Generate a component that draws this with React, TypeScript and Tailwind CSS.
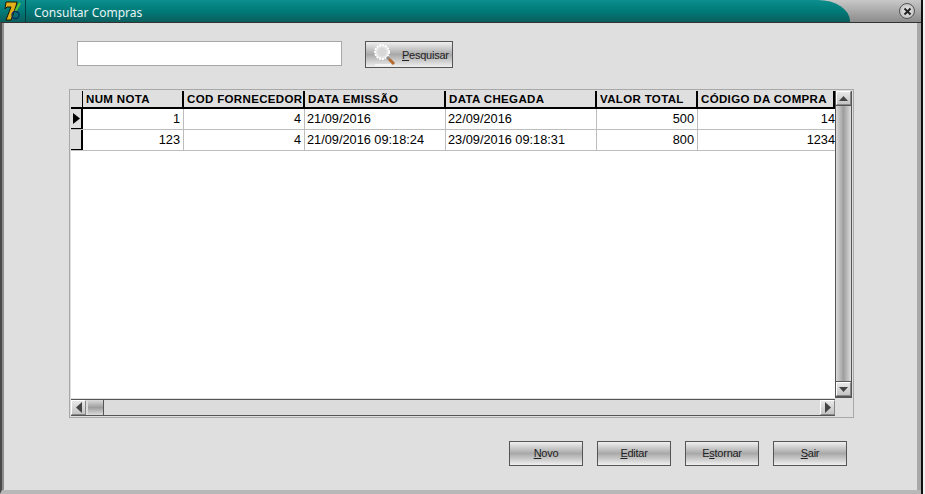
// Consultar Compras window
const columns = ['NUM NOTA', 'COD FORNECEDOR', 'DATA EMISSÃO', 'DATA CHEGADA', 'VALOR TOTAL', 'CÓDIGO DA COMPRA'];
const rows = [
  ['1', '4', '21/09/2016', '22/09/2016', '500', '14'],
  ['123', '4', '21/09/2016 09:18:24', '23/09/2016 09:18:31', '800', '1234'],
];
const rightAligned = [true, true, false, false, true, true];
const gridCols = 'grid grid-cols-[12px_101px_121px_141px_151px_101px_137px]';

function Logo() {
  return (
    <svg width="25" height="22" viewBox="0 0 25 22" className="shrink-0">
      <polygon points="6,2 17,2 16,6 11,20 6,20 11,7 7,7 5,9" fill="#e0b01a" stroke="#1c1600" strokeWidth="1" />
      <path d="M15 12 L20 3" stroke="#5ac42c" strokeWidth="2.2" />
      <circle cx="15.5" cy="15" r="3.5" fill="none" stroke="#0c2a66" strokeWidth="1.3" />
    </svg>
  );
}

function CloseButton() {
  return (
    <div className="flex h-[16px] w-[16px] items-center justify-center rounded-full border border-[#555] bg-[radial-gradient(circle,#f2f2f2,#b0b0b0)]">
      <svg width="9" height="9" viewBox="0 0 9 9">
        <path d="M1.5 1.5 L7.5 7.5 M7.5 1.5 L1.5 7.5" stroke="#222" strokeWidth="2" />
      </svg>
    </div>
  );
}

function Magnifier() {
  return (
    <svg width="26" height="24" viewBox="0 0 26 24" className="shrink-0">
      <rect x="4" y="21" width="16" height="2" fill="#f4f4f4" />
      <circle cx="11" cy="9" r="7" fill="#e6e6e6" stroke="#ffffff" strokeWidth="2" strokeDasharray="2 1" />
      <circle cx="11" cy="9" r="4.5" fill="#d8d8d8" />
      <path d="M16 14 L18 16" stroke="#8a8a8a" strokeWidth="3" />
      <path d="M18 16 L23 21" stroke="#b5692c" strokeWidth="3" />
    </svg>
  );
}

function ActionButton({ before = '', mark, after }: { before?: string; mark: string; after: string }) {
  return (
    <button className="h-[25px] w-[74px] border border-[#555] bg-gradient-to-b from-[#f0f0f0] via-[#a9a9a9] to-[#f0f0f0] text-[11px] leading-none tracking-[-0.25px] text-[#222]">
      {before}<u>{mark}</u>{after}
    </button>
  );
}

function ScrollArrow({ dir }: { dir: 'up' | 'down' | 'left' | 'right' }) {
  const points = { up: '1,6 10,6 5.5,1', down: '1,1 10,1 5.5,6', left: '7,0 7,11 1,5.5', right: '1,0 1,11 7,5.5' }[dir];
  const vertical = dir === 'up' || dir === 'down';
  return (
    <div className={`flex shrink-0 items-center justify-center border border-t-white border-l-white border-r-[#888] border-b-[#888] bg-gradient-to-b from-[#e8e8e8] to-[#c4c4c4] ${vertical ? 'h-[14px] w-[15px]' : 'h-[15px] w-[15px]'}`}>
      <svg width={vertical ? 11 : 8} height={vertical ? 7 : 11}>
        <polygon points={points} fill="#444" />
      </svg>
    </div>
  );
}

export default function App() {
  return (
    <div className="h-[494px] w-[925px] overflow-hidden bg-[#f2f2f2] font-['Liberation_Sans',sans-serif]">
      <div className="flex h-full w-[923px] flex-col border-r-2 border-[#111]">
        {/* title bar */}
        <div className="flex h-[22px] shrink-0 items-center bg-gradient-to-b from-[#c8c8c8] to-[#8c8c8c] pr-[6px]">
          <div className="flex h-full w-[850px] items-center rounded-tr-[32px_21px] bg-gradient-to-b from-[#0c8f8d] via-[#007a78] to-[#0a5f5e]">
            <Logo />
            <div className="h-full w-px bg-[#063f3f]" />
            <span className="ml-[8px] pt-[3px] font-['Noto_Sans',sans-serif] text-[12px] leading-none text-[#e8f4f4]">Consultar Compras</span>
          </div>
          <div className="ml-auto">
            <CloseButton />
          </div>
        </div>

        {/* window body */}
        <div className="flex min-h-0 flex-1 flex-col border-t border-b-[4px] border-l-2 border-t-[#333] border-b-[#b8b8b8] border-l-[#4a4a4a]">
          <div className="flex min-h-0 flex-1 flex-col border-r-[4px] border-l-2 border-r-[#a8a8a8] border-l-[#8c8c8c] bg-[#dfdfdf] pl-[73px]">
            {/* search */}
            <div className="mt-[18px] flex items-start">
              <input className="h-[25px] w-[265px] border border-[#a8a8a8] bg-white" />
              <button className="ml-[23px] flex h-[27px] w-[88px] items-center border border-[#555] bg-gradient-to-b from-[#f0f0f0] via-[#a9a9a9] to-[#f0f0f0] pl-[5px] text-[11px] leading-none tracking-[-0.25px] text-[#222]">
                <Magnifier />
                <span className="mt-[2px] ml-[5px]"><u>P</u>esquisar</span>
              </button>
            </div>

            {/* data grid */}
            <div className="mt-[21px] ml-[-8px] flex h-[329px] w-[785px] flex-col border border-[#a8a8a8] p-px">
              <div className="flex min-h-0 flex-1">
                <div className="w-[764px] shrink-0 overflow-hidden bg-white">
                  <div className={`${gridCols} h-[18px] w-[764px] border-b-2 border-black bg-[#dfdfdf]`}>
                    <div className="border-r border-black" />
                    {columns.map((c) => (
                      <div key={c} className="overflow-hidden border-r-2 border-black pl-[3px] text-[11.5px] leading-[17px] font-bold tracking-[0.35px] whitespace-nowrap text-black">
                        {c}
                      </div>
                    ))}
                  </div>
                  {rows.map((row, r) => (
                    <div key={r} className={`${gridCols} h-[21px] w-[764px] border-b border-[#bdbdbd]`}>
                      <div className="flex items-center border-r-2 border-b border-black bg-[#dfdfdf] pl-[2px]">
                        {r === 0 && (
                          <svg width="7" height="11"><polygon points="0,0 7,5.5 0,11" fill="#000" /></svg>
                        )}
                      </div>
                      {row.map((cell, i) => (
                        <div key={i} className={`text-[12.75px] leading-[20px] text-black ${i === 5 ? 'pl-[2px]' : 'border-r border-[#bdbdbd] pr-[3px] pl-[2px]'} ${rightAligned[i] ? 'text-right' : 'text-left'}`}>
                          {cell}
                        </div>
                      ))}
                    </div>
                  ))}
                </div>
                {/* vertical scrollbar */}
                <div className="flex w-[17px] shrink-0 flex-col border-x border-b-2 border-[#555] bg-gradient-to-r from-[#dcdcdc] via-[#9e9e9e] to-[#dcdcdc]">
                  <ScrollArrow dir="up" />
                  <div className="flex-1 border-y border-[#555]" />
                  <ScrollArrow dir="down" />
                </div>
              </div>
              {/* horizontal scrollbar */}
              <div className="mt-px flex h-[17px] w-[764px] items-center border-y border-[#555] bg-[#dcdcdc]">
                <ScrollArrow dir="left" />
                <div className="ml-[2px] h-full w-[16px] border-r border-[#555] bg-gradient-to-b from-[#dcdcdc] via-[#9e9e9e] to-[#dcdcdc]" />
                <div className="flex-1" />
                <ScrollArrow dir="right" />
              </div>
            </div>

            {/* actions */}
            <div className="mt-[23px] ml-[432px] flex gap-[14px]">
              <ActionButton mark="N" after="ovo" />
              <ActionButton mark="E" after="ditar" />
              <ActionButton before="E" mark="s" after="tornar" />
              <ActionButton mark="S" after="air" />
            </div>
          </div>
        </div>
      </div>
    </div>
  );
}
